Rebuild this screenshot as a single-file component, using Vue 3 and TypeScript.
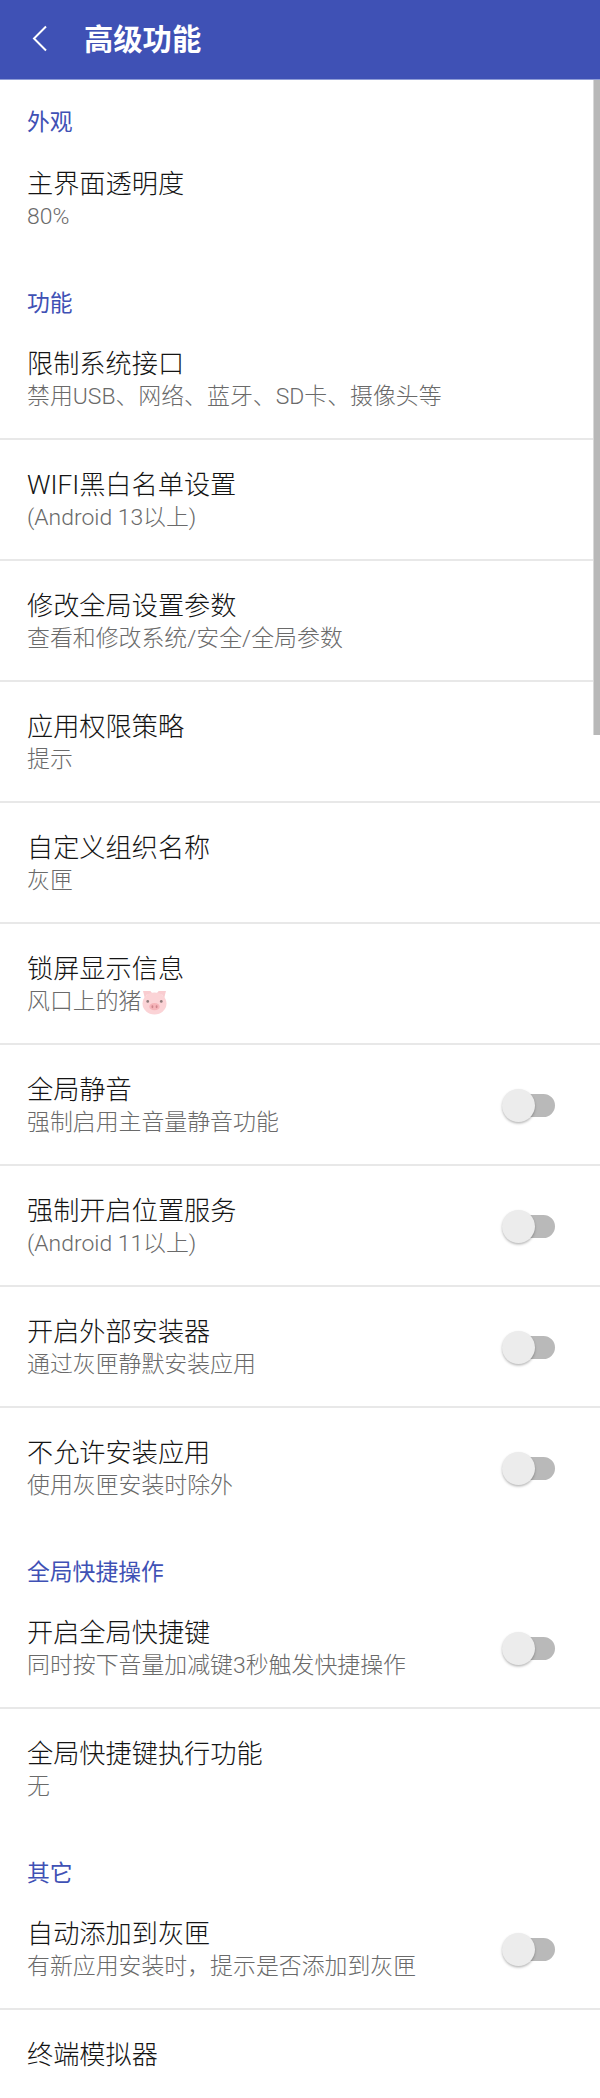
<script setup lang="ts">
interface Row {
  title: string
  sub?: string
  pig?: boolean
  toggle?: boolean
}

interface Section {
  name: string
  rows: Row[]
}

const sections: Section[] = [
  {
    name: '外观',
    rows: [{ title: '主界面透明度', sub: '80%' }],
  },
  {
    name: '功能',
    rows: [
      { title: '限制系统接口', sub: '禁用USB、网络、蓝牙、SD卡、摄像头等' },
      { title: 'WIFI黑白名单设置', sub: '(Android 13以上)' },
      { title: '修改全局设置参数', sub: '查看和修改系统/安全/全局参数' },
      { title: '应用权限策略', sub: '提示' },
      { title: '自定义组织名称', sub: '灰匣' },
      { title: '锁屏显示信息', sub: '风口上的猪', pig: true },
      { title: '全局静音', sub: '强制启用主音量静音功能', toggle: true },
      { title: '强制开启位置服务', sub: '(Android 11以上)', toggle: true },
      { title: '开启外部安装器', sub: '通过灰匣静默安装应用', toggle: true },
      { title: '不允许安装应用', sub: '使用灰匣安装时除外', toggle: true },
    ],
  },
  {
    name: '全局快捷操作',
    rows: [
      { title: '开启全局快捷键', sub: '同时按下音量加减键3秒触发快捷操作', toggle: true },
      { title: '全局快捷键执行功能', sub: '无' },
    ],
  },
  {
    name: '其它',
    rows: [
      { title: '自动添加到灰匣', sub: '有新应用安装时，提示是否添加到灰匣', toggle: true },
      { title: '终端模拟器' },
    ],
  },
]
</script>

<template>
  <div class="screen">
    <header class="appbar">
      <svg class="back" width="16" height="27" viewBox="0 0 16 27" fill="none">
        <path d="M14 1.500 2 13.500l12 12" stroke="#fff" stroke-width="2" />
      </svg>
      <h1 class="appbar__title">高级功能</h1>
    </header>

    <main class="list">
      <section v-for="section in sections" :key="section.name">
        <h2 class="section-name">{{ section.name }}</h2>
        <div v-for="row in section.rows" :key="row.title" class="row">
          <div class="row__text">
            <div class="row__title">{{ row.title }}</div>
            <div class="row__sub">
              {{ row.sub }}
              <svg v-if="row.pig" class="pig" viewBox="0 0 24 24">
                <path d="M1 1h7l3 3.500H4.500L3 9Z" fill="#f9ccd0" />
                <path d="M23 1h-7l-3 3.500h6.500L21 9Z" fill="#f9ccd0" />
                <ellipse cx="12" cy="13" rx="11.500" ry="10.500" fill="#fbd3d6" />
                <circle cx="5.500" cy="11" r="1.300" fill="#8f7a7a" />
                <circle cx="18.500" cy="11" r="1.300" fill="#8f7a7a" />
                <ellipse cx="12" cy="16" rx="5" ry="3.500" fill="#f6b4b9" />
                <ellipse cx="10" cy="16" rx="0.900" ry="1.400" fill="#cf858c" />
                <ellipse cx="14" cy="16" rx="0.900" ry="1.400" fill="#cf858c" />
              </svg>
            </div>
          </div>
          <div v-if="row.toggle" class="switch">
            <span class="switch__thumb" />
          </div>
        </div>
      </section>
    </main>

    <div class="scrollbar" />
  </div>
</template>

<style scoped>
.screen {
  position: relative;
  width: 600px;
  height: 2098px;
  overflow: hidden;
  background: #fff;
  font-family: Roboto, "Noto Sans CJK SC", sans-serif;
  font-weight: 300;
}
.appbar {
  display: flex;
  align-items: center;
  gap: 36px;
  box-sizing: border-box;
  height: 80px;
  padding: 0 0 3px 32px;
  background: #3f51b5;
  border-bottom: 1px solid #8f9cd6;
}
.back {
  flex: none;
}
.appbar__title {
  margin: 0 0 3px;
  font-size: 29.3px;
  font-weight: 700;
  color: #fff;
}
.section-name {
  height: 60px;
  margin: 0;
  padding-top: 30px;
  box-sizing: border-box;
  padding-left: 27px;
  font-size: 22.8px;
  line-height: 30px;
  font-weight: 400;
  color: #3f51b5;
}
section:first-child .section-name {
  height: 59px;
  padding-top: 28px;
}
.row {
  display: flex;
  align-items: center;
  justify-content: space-between;
  height: 118px;
  padding: 1px 45px 0 27px;
  border-bottom: 2px solid #e8e8e8;
}
.row:last-child {
  height: 120px;
  padding-top: 0;
  border-bottom: 0;
}
.row__text {
  display: flex;
  flex-direction: column;
}
.row__title {
  height: 36px;
  font-size: 26.2px;
  line-height: 36px;
  color: #141414;
}
.row__sub {
  display: flex;
  align-items: center;
  height: 30px;
  font-size: 22.9px;
  line-height: 30px;
  color: #6a6a6a;
}
.pig {
  width: 25px;
  height: 25px;
  margin-left: 1px;
}
.switch {
  position: relative;
  width: 50px;
  height: 23px;
  border-radius: 12px;
  background: #b9b9b9;
}
.switch__thumb {
  position: absolute;
  left: -3px;
  top: -5px;
  width: 33px;
  height: 33px;
  border-radius: 50%;
  background: #ececec;
  box-shadow: 0 1.500px 2.500px rgba(0, 0, 0, 0.28);
}
.scrollbar {
  position: absolute;
  top: 80px;
  right: 0;
  width: 6px;
  height: 655px;
  background: #b8b8b8;
  border-left: 1px solid #d8d8d8;
}
</style>
